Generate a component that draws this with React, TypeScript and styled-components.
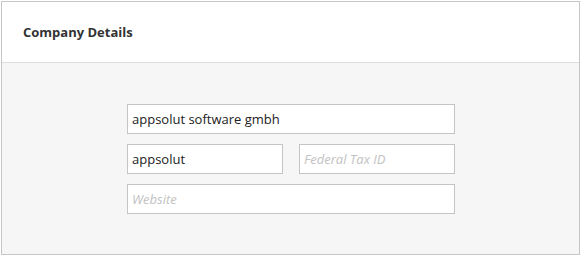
import styled, { createGlobalStyle } from 'styled-components';

const GlobalStyle = createGlobalStyle`
  html, body {
    margin: 0;
    padding: 0;
    background: #ffffff;
  }
  body {
    font-family: 'Open Sans', 'Noto Sans', sans-serif;
  }
`;

const Panel = styled.section`
  margin: 1px 0 0 1px;
  width: 579px;
  height: 254px;
  box-sizing: border-box;
  border: 1px solid #c6c6c6;
  display: flex;
  flex-direction: column;
`;

const PanelHeader = styled.header`
  height: 61px;
  box-sizing: border-box;
  background: #ffffff;
  border-bottom: 1px solid #dcdcdc;
  display: flex;
  align-items: center;
  padding: 0 21px;
`;

const Title = styled.h2`
  margin: 0;
  font-size: 13px;
  font-weight: 700;
  color: #333333;
`;

const PanelBody = styled.div`
  flex: 1;
  background: #f6f6f6;
  display: flex;
  justify-content: center;
  padding-top: 41px;
  padding-left: 1px;
`;

const Form = styled.form`
  width: 328px;
  display: flex;
  flex-direction: column;
  gap: 10px;
`;

const Row = styled.div`
  display: grid;
  grid-template-columns: 156px 156px;
  justify-content: space-between;
`;

const Field = styled.input`
  box-sizing: border-box;
  width: 100%;
  height: 30px;
  margin: 0;
  padding: 0 4px;
  border: 1px solid #c4c4c4;
  border-radius: 0;
  background: #ffffff;
  font-family: 'Open Sans', 'Noto Sans', sans-serif;
  font-size: 13px;
  color: #222222;
  outline: none;

  &::placeholder {
    color: #c2c2c2;
    font-style: italic;
  }
`;

const App = () => {
  return (
    <>
      <GlobalStyle />
      <Panel>
        <PanelHeader>
          <Title>Company Details</Title>
        </PanelHeader>
        <PanelBody>
          <Form onSubmit={(e) => e.preventDefault()}>
            <Field defaultValue="appsolut software gmbh" />
            <Row>
              <Field defaultValue="appsolut" />
              <Field placeholder="Federal Tax ID" />
            </Row>
            <Field placeholder="Website" />
          </Form>
        </PanelBody>
      </Panel>
    </>
  );
};

export default App;
